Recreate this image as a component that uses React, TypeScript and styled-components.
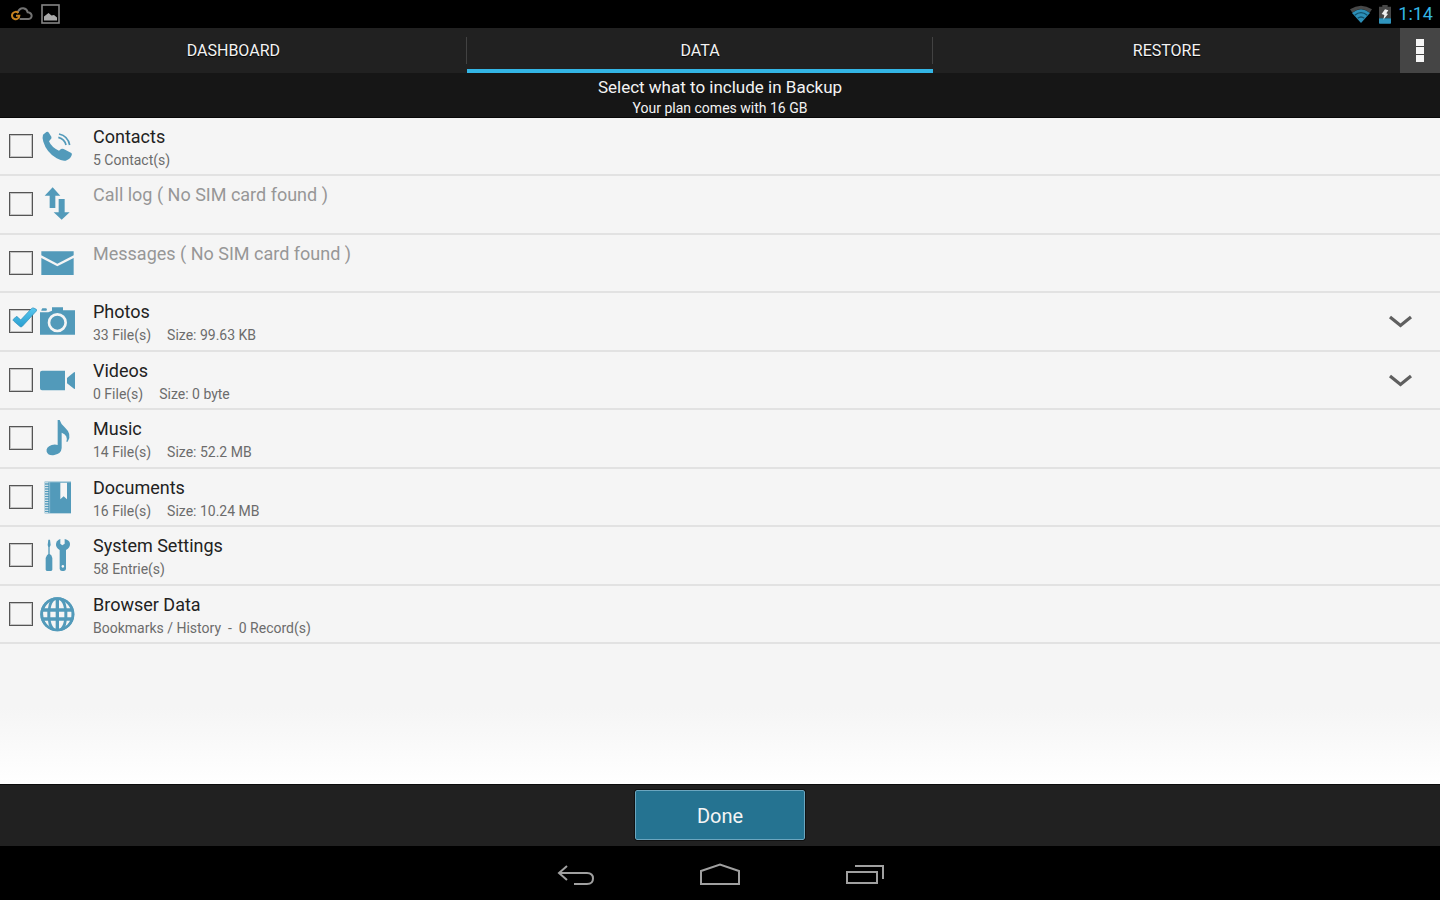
import React from "react";
import styled, { createGlobalStyle, css } from "styled-components";

const ACCENT = "#33b5e5";
const ICON_BLUE = "#529aba";

const GlobalStyle = createGlobalStyle`
  *, *::before, *::after { box-sizing: border-box; }
  body {
    margin: 0;
    background: #000;
    font-family: Roboto, "Liberation Sans", sans-serif;
  }
  button { font-family: inherit; cursor: pointer; }
`;

const Screen = styled.div`
  display: flex;
  flex-direction: column;
  min-height: 100vh;
`;

const StatusBar = styled.header`
  display: flex;
  align-items: center;
  justify-content: space-between;
  height: 28px;
  padding: 0 7px 0 10px;
  background: #000;
`;

const StatusGroup = styled.div<{ $gap: number }>`
  display: flex;
  align-items: center;
  gap: ${(p) => p.$gap}px;
  svg { display: block; }
`;

const Clock = styled.time`
  color: ${ACCENT};
  font-size: 18px;
  line-height: 28px;
`;

const ActionBar = styled.nav`
  display: flex;
  height: 45px;
  background: #212121;
`;

const TabList = styled.div`
  display: flex;
  flex: 1;
`;

const Tab = styled.button<{ $active?: boolean }>`
  position: relative;
  flex: 1;
  padding: 5px 0 0;
  border: 0;
  border-bottom: 4px solid ${(p) => (p.$active ? ACCENT : "transparent")};
  background: transparent;
  color: #f3f3f3;
  font-size: 16px;
  line-height: 36px;
  text-shadow: 0 1px 1px #000;

  &:not(:first-child)::before {
    content: "";
    position: absolute;
    top: 9px;
    left: -1px;
    width: 1px;
    height: 27px;
    background: #424242;
  }
`;

const OverflowButton = styled.button`
  display: flex;
  flex-direction: column;
  align-items: center;
  justify-content: center;
  gap: 1px;
  width: 40px;
  padding: 0;
  border: 0;
  background: #454545;
`;

const Dot = styled.span`
  width: 8px;
  height: 7px;
  background: #f5f5f5;
`;

const Heading = styled.div`
  height: 45px;
  padding-top: 3px;
  border-bottom: 1px solid #080808;
  background: #161616;
  color: #f3f3f3;
  text-align: center;
`;

const HeadingTitle = styled.h1`
  margin: 0;
  font-size: 17px;
  font-weight: 400;
  line-height: 22px;
`;

const HeadingNote = styled.p`
  margin: 0;
  font-size: 14px;
  line-height: 20px;
`;

const Content = styled.main`
  flex: 1;
  background: linear-gradient(to top, #fff 0, #f5f5f5 76px);
`;

const List = styled.ul`
  margin: 0;
  padding: 0;
  list-style: none;
`;

const Row = styled.li`
  display: flex;
  align-items: flex-start;
  height: 58px;
  padding: 0 27px 0 9px;
  border-bottom: 2px solid #e2e2e2;

  &:nth-child(even) { height: 59px; }
`;

const CheckWrap = styled.span`
  position: relative;
  display: block;
  width: 24px;
  height: 24px;
  margin: 16px 6px 0 0;
`;

const CheckBox = styled.input`
  appearance: none;
  display: block;
  width: 24px;
  height: 24px;
  margin: 0;
  border: 1px solid #555;
  outline: 1px solid #c4c4c4;
  outline-offset: -2px;
  background: transparent;
`;

const CheckMark = styled.svg`
  position: absolute;
  top: -2px;
  left: 3px;
  pointer-events: none;
`;

const RowIcon = styled.svg`
  display: block;
  flex: none;
  width: 38px;
  height: 38px;
  margin: 9px 16px 0 0;
  fill: ${ICON_BLUE};
`;

const RowText = styled.label`
  flex: 1;
  display: block;
  padding-top: 6px;
`;

const RowTitle = styled.span<{ $muted?: boolean }>`
  display: block;
  color: ${(p) => (p.$muted ? "#979797" : "#222")};
  font-size: 18px;
  line-height: 25px;
`;

const RowDetail = styled.span`
  display: flex;
  gap: 16px;
  color: #6c6c6c;
  font-size: 14px;
  line-height: 23px;
  white-space: pre;
`;

const ExpandButton = styled.button`
  display: block;
  margin-top: 22px;
  padding: 0;
  border: 0;
  background: transparent;
  svg { display: block; }
`;

const Footer = styled.footer`
  display: flex;
  justify-content: center;
  padding: 5px 0 6px;
  border-top: 1px solid #0c0c0c;
  background: #212121;
`;

const DoneButton = styled.button`
  width: 170px;
  height: 50px;
  padding: 0;
  border: 1px solid #6ba6bf;
  border-radius: 2px;
  outline: 1px solid #111;
  background: #257391;
  color: #f5f5f5;
  font-size: 20px;
  line-height: 50px;
`;

const SystemNav = styled.nav`
  display: flex;
  justify-content: center;
  gap: 96px;
  height: 54px;
  background: #000;
`;

const navStroke = css`
  fill: none;
  stroke: #a0a0a0;
  stroke-width: 2;
`;

const NavButton = styled.button`
  padding: 0;
  border: 0;
  background: transparent;
  width: 48px;
  svg { display: block; ${navStroke} }
`;

/* Row glyphs are drawn on a 114 unit grid. */
const icons: Record<string, React.ReactNode> = {
  phone: (
    <>
      <path d="M12 23 L22 15 Q27 13 30 18 L37 29 Q39 34 35 37 L30 43 Q38 62 60 71 L66 66 Q70 64 74 66 L97 78 Q100 81 98 85 Q93 98 80 101 Q68 103 53 94 Q22 75 13 44 Q9 31 12 23Z" />
      <path d="M60 21 Q87 27 92 54 M58 31 Q77 36 81 54" fill="none" stroke={ICON_BLUE} strokeWidth="5" />
    </>
  ),
  arrows: <path d="M41 7 L64 32 H49 V69 H32 V32 H17Z M59 42 H77 V82 H92 L68 104 L44 82 H59Z" />,
  mail: (
    <>
      <path d="M7 22 H104 V34 L55 59 L7 34Z" />
      <path d="M7 42 L55 67 L104 42 V93 H7Z" />
    </>
  ),
  camera: (
    <>
      <path d="M3 31 H28 L39 26 V16 H72 V25 H108 V98 H3Z M7 24 L10 19 H22 L24 23 L22 26 H7Z" />
      <circle cx="55" cy="62" r="25" fill="none" stroke="#f5f5f5" strokeWidth="8" />
    </>
  ),
  video: <path d="M9 29 H78 V88 H9 Q3 88 3 82 V35 Q3 29 9 29Z M84 51 L105 34 Q108 32 108 36 V82 Q108 86 105 83 L84 67Z" />,
  music: <path d="M56 3 H62 Q65 14 77 25 Q101 47 86 68 L82 68 Q88 48 68 41 V87 Q67 104 46 108 Q28 111 23 98 Q20 84 38 78 Q48 75 56 78Z" />,
  documents: (
    <>
      <path d="M17 11 H96 V106 H17Z" />
      <path d="M64 14 H84 V64 L74 55 L64 64Z" fill="#f5f5f5" />
      <path d="M23 12 V105" stroke="#f5f5f5" strokeWidth="10" strokeDasharray="2 3" />
      <path d="M32 12 V105 M17 12 H96" stroke="#a9cddd" strokeWidth="2" />
    </>
  ),
  tools: (
    <>
      <path d="M28 11 H33 L35 27 L32 34 V54 L37 58 L40 66 V101 Q39 105 35 105 H25 Q21 105 20 101 V66 L24 58 L28 54 V34 L26 27Z" />
      <path
        fillRule="evenodd"
        d="M59 11 L64 9 V23 L70 28 L77 23 V9 Q92 13 93 23 Q94 34 81 42 V99 Q80 105 74 105 H69 Q63 105 62 99 V42 Q50 35 51 24 Q51 15 59 11Z M71 87 A4 4 0 1 0 72 87Z"
      />
    </>
  ),
  globe: (
    <>
      <circle cx="55" cy="58" r="51" />
      <path
        fill="#f5f5f5"
        d="M33 18 Q21 25 16 40 H27 Q28 28 33 18Z M77 18 Q89 25 94 40 H83 Q82 28 77 18Z M50 14 Q38 20 35 40 H50Z M60 14 Q72 20 75 40 H60Z M12 50 H25 V67 H13Z M34 50 H50 V67 H34Z M60 50 H76 V67 H60Z M85 50 H98 V67 H85Z M16 77 H27 Q28 89 33 98 Q21 91 16 77Z M94 77 H83 Q82 89 77 98 Q89 91 94 77Z M35 77 H50 V102 Q39 97 35 77Z M75 77 H60 V102 Q71 97 75 77Z"
      />
      <circle cx="55" cy="58" r="47" fill="none" stroke={ICON_BLUE} strokeWidth="8" />
    </>
  ),
};

type Item = {
  icon: string;
  title: string;
  details?: string[];
  checked?: boolean;
  muted?: boolean;
  expandable?: boolean;
};

const items: Item[] = [
  { icon: "phone", title: "Contacts", details: ["5 Contact(s)"] },
  { icon: "arrows", title: "Call log ( No SIM card found )", muted: true },
  { icon: "mail", title: "Messages ( No SIM card found )", muted: true },
  { icon: "camera", title: "Photos", details: ["33 File(s)", "Size: 99.63 KB"], checked: true, expandable: true },
  { icon: "video", title: "Videos", details: ["0 File(s)", "Size: 0 byte"], expandable: true },
  { icon: "music", title: "Music", details: ["14 File(s)", "Size: 52.2 MB"] },
  { icon: "documents", title: "Documents", details: ["16 File(s)", "Size: 10.24 MB"] },
  { icon: "tools", title: "System Settings", details: ["58 Entrie(s)"] },
  { icon: "globe", title: "Browser Data", details: ["Bookmarks / History  -  0 Record(s)"] },
];

function BackupRow({ item }: { item: Item }) {
  const [checked, setChecked] = React.useState(!!item.checked);
  const id = `include-${item.icon}`;
  return (
    <Row>
      <CheckWrap>
        <CheckBox
          id={id}
          type="checkbox"
          checked={checked}
          disabled={item.muted}
          onChange={(e) => setChecked(e.target.checked)}
        />
        {checked && (
          <CheckMark width="25" height="21" viewBox="0 0 75 63" aria-hidden="true">
            <defs>
              <linearGradient id="tick" x1="0" y1="0" x2="0" y2="1">
                <stop offset="0" stopColor="#58c6ee" />
                <stop offset="1" stopColor="#2a9fd0" />
              </linearGradient>
            </defs>
            <path
              d="M4 37 L12 29 Q15 28 18 31 L26 39 L58 5 Q61 2 65 3 L73 7 Q75 9 73 12 L31 58 Q27 62 23 58 L5 42 Q2 40 4 37Z"
              fill="url(#tick)"
              stroke="#2b8db8"
              strokeWidth="2"
            />
          </CheckMark>
        )}
      </CheckWrap>
      <RowIcon viewBox="0 0 114 114" aria-hidden="true">{icons[item.icon]}</RowIcon>
      <RowText htmlFor={id}>
        <RowTitle $muted={item.muted}>{item.title}</RowTitle>
        {item.details && (
          <RowDetail>
            {item.details.map((d) => (
              <span key={d}>{d}</span>
            ))}
          </RowDetail>
        )}
      </RowText>
      {item.expandable && (
        <ExpandButton type="button" aria-label={`Expand ${item.title}`}>
          <svg width="25" height="14" viewBox="0 0 25 14">
            <path d="M2 2 L12.5 10.5 L23 2" fill="none" stroke="#5f5f5f" strokeWidth="3.2" />
          </svg>
        </ExpandButton>
      )}
    </Row>
  );
}

const tabs = ["DASHBOARD", "DATA", "RESTORE"];

export default function App() {
  return (
    <Screen>
      <GlobalStyle />
      <StatusBar>
        <StatusGroup $gap={8}>
          <svg width="23" height="14" viewBox="0 0 69 42" fill="none" aria-hidden="true">
            <path
              d="M23 17 Q28 3 40 4 Q51 6 53 16 Q65 18 65 27 Q64 35 56 36 H29"
              stroke="#737373"
              strokeWidth="6"
            />
            <path d="M25 18 A11 11 0 1 0 28 26 H18" stroke="#c98420" strokeWidth="6" />
          </svg>
          <svg width="20" height="20" viewBox="0 0 20 20" aria-hidden="true">
            <rect x="1" y="1" width="17" height="18" fill="none" stroke="#858585" strokeWidth="1.6" />
            <path d="M3 16.5 V12.5 L7.5 9 L10.5 11.5 L13 11 L16 13.5 V16.5Z" fill="#aaa" />
          </svg>
        </StatusGroup>
        <StatusGroup $gap={7}>
          <svg width="22" height="18" viewBox="0 0 66 54" aria-hidden="true">
            <path d="M0 13 Q33 -9 66 13 L59 23 Q33 3 7 23Z" fill="#484848" />
            <path d="M6 24 Q33 2 60 24 L33 54Z" fill="#2c8fb8" />
            <path d="M14 31 Q33 15 52 31 M23 40 Q33 32 43 40" fill="none" stroke="#12506b" strokeWidth="4" />
          </svg>
          <svg width="12" height="19" viewBox="0 0 36 57" aria-hidden="true">
            <path d="M10 0 H26 V5 H36 V40 H0 V5 H10Z" fill="#474747" />
            <path d="M0 40 H36 V54 Q36 56 34 56 H2 Q0 56 0 54Z" fill="#2f94bd" />
            <path d="M18 13 L28 16 L22 25 L27 27 L13 44 L16 30 L8 27Z" fill="#eee" />
          </svg>
          <Clock>1:14</Clock>
        </StatusGroup>
      </StatusBar>

      <ActionBar>
        <TabList>
          {tabs.map((t) => (
            <Tab key={t} type="button" $active={t === "DATA"}>{t}</Tab>
          ))}
        </TabList>
        <OverflowButton type="button" aria-label="More options">
          <Dot />
          <Dot />
          <Dot />
        </OverflowButton>
      </ActionBar>

      <Heading>
        <HeadingTitle>Select what to include in Backup</HeadingTitle>
        <HeadingNote>Your plan comes with 16 GB</HeadingNote>
      </Heading>

      <Content>
        <List>
          {items.map((item) => (
            <BackupRow key={item.title} item={item} />
          ))}
        </List>
      </Content>

      <Footer>
        <DoneButton type="button">Done</DoneButton>
      </Footer>

      <SystemNav>
        <NavButton type="button" aria-label="Back">
          <svg width="48" height="54" viewBox="0 0 48 54">
            <path d="M15 20 L7 27 L15 34 M7 27 H35 Q41 27 41 32.5 Q41 38 35 38 H22" />
          </svg>
        </NavButton>
        <NavButton type="button" aria-label="Home">
          <svg width="48" height="54" viewBox="0 0 48 54">
            <path d="M5 25 L24 18.5 L43 25 V38 H5Z" />
          </svg>
        </NavButton>
        <NavButton type="button" aria-label="Recent apps">
          <svg width="48" height="54" viewBox="0 0 48 54">
            <path d="M7 26 H37 V37 H7Z M15 20 H43 V33" />
          </svg>
        </NavButton>
      </SystemNav>
    </Screen>
  );
}
